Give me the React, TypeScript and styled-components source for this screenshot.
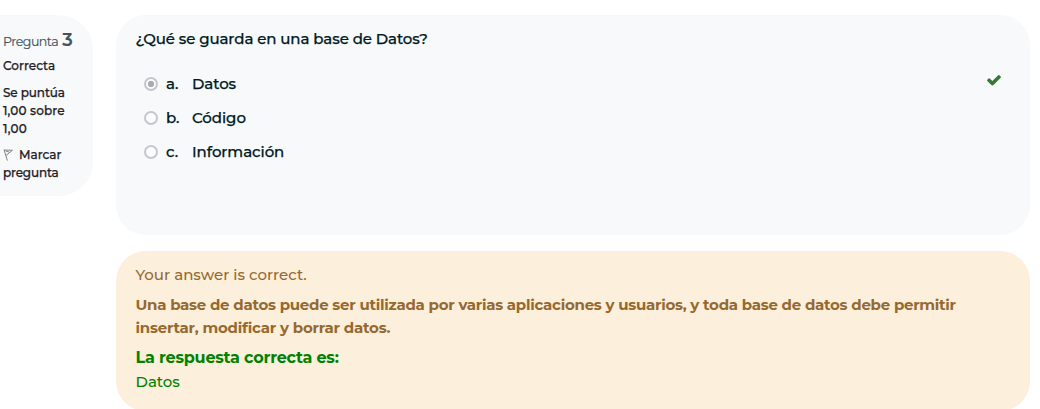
import React from "react";
import styled, { createGlobalStyle } from "styled-components";

const Global = createGlobalStyle`
  * { box-sizing: border-box; }
  body { margin: 0; background: #fff; overflow: hidden; font-family: Montserrat, Inter, sans-serif; }
`;

const Page = styled.main`
  display: flex;
  align-items: flex-start;
  gap: 23px;
  height: 409px;
  padding: 15px 10px 0 0;
  overflow: hidden;
`;

const Info = styled.aside`
  width: 123px;
  height: 181px;
  margin-left: -30px;
  padding: 13px 20px 0 33px;
  border-radius: 34px;
  background: #f8f9fb;
  color: #1d2125;
  font-size: 12px;
  font-weight: 500;
  line-height: 18px;
`;

const Heading = styled.h3`
  display: flex;
  align-items: baseline;
  gap: 4px;
  height: 29px;
  margin: 0;
  color: #46535c;
  font-size: 12.6px;
  font-weight: 400;
  letter-spacing: -0.5px;
  line-height: 24px;
  -webkit-text-stroke: 0.15px currentColor;
`;

const Number = styled.span`
  font-size: 18px;
  font-weight: 600;
`;

const InfoLine = styled.div<{ $spacing?: number }>`
  display: flex;
  align-items: center;
  height: 18px;
  white-space: nowrap;
  letter-spacing: ${(p) => p.$spacing ?? 0}px;
  -webkit-text-stroke: 0.25px currentColor;
`;

const InfoGroup = styled.div<{ $gap: number }>`
  margin-bottom: ${(p) => p.$gap}px;
`;

const FlagIcon = styled.svg`
  width: 10px;
  height: 12px;
  margin-right: 6px;
`;

const Content = styled.div`
  flex: 1;
  display: flex;
  flex-direction: column;
  gap: 16px;
`;

const Question = styled.section`
  height: 220px;
  padding: 12px 28px 0 19.5px;
  border-radius: 30px;
  background: #f8f9fb;
  color: #001a1e;
  font-size: 15px;
  font-weight: 500;
  -webkit-text-stroke: 0.25px currentColor;
`;

const Text = styled.p<{ $spacing?: number; $bold?: boolean; $size?: number; $height?: number; $gap?: number }>`
  margin: 0 0 ${(p) => p.$gap ?? 0}px;
  font-size: ${(p) => p.$size ?? 15}px;
  line-height: ${(p) => p.$height ?? 23}px;
  font-weight: ${(p) => (p.$bold ? 700 : 500)};
  letter-spacing: ${(p) => p.$spacing ?? 0}px;
  white-space: nowrap;
`;

const Options = styled.div`
  padding: 17px 0 0 8.5px;
`;

const Option = styled.label`
  display: flex;
  align-items: center;
  height: 34px;
`;

const Radio = styled.span<{ $on?: boolean }>`
  width: 14px;
  height: 14px;
  margin-right: 8px;
  border: 2px solid #c6c7cd;
  border-radius: 50%;
  background: ${(p) => (p.$on ? "radial-gradient(circle, #a9abb4 0 2.8px, #f8f9fb 3.5px)" : "#fcfcfd")};
`;

const Letter = styled.span`
  width: 26px;
  padding-bottom: 2px;
`;

const Label = styled.span`
  padding-bottom: 2px;
  letter-spacing: -0.05px;
`;

const Check = styled.svg`
  width: 16px;
  height: 16px;
  margin: 0 0 8px auto;
  fill: #357a32;
`;

const Feedback = styled.section`
  height: 160px;
  padding: 12px 20px 0 19.5px;
  border-radius: 30px;
  background: #fcefdc;
  color: #95692f;
`;

const Answer = styled.div`
  color: #008200;
`;

const options = [
  { letter: "a.", label: "Datos", on: true },
  { letter: "b.", label: "Código" },
  { letter: "c.", label: "Información" },
];

export default function App() {
  return (
    <>
      <Global />
      <Page>
        <Info>
          <Heading>Pregunta <Number>3</Number></Heading>
          <InfoGroup $gap={9}><InfoLine $spacing={0.05}>Correcta</InfoLine></InfoGroup>
          <InfoGroup $gap={8}>
            <InfoLine $spacing={-0.1}>Se puntúa</InfoLine>
            <InfoLine $spacing={0.15}>1,00 sobre</InfoLine>
            <InfoLine $spacing={0.2}>1,00</InfoLine>
          </InfoGroup>
          <InfoLine>
            <FlagIcon viewBox="0 0 10 12" fill="none" stroke="#777" strokeWidth="0.9">
              <path d="M1 .8 4.4 11.6M1 1 9.4 1.3 3 6.4M2.6 2 6.2 3" />
            </FlagIcon>
            Marcar
          </InfoLine>
          <InfoLine $spacing={-0.15}>pregunta</InfoLine>
        </Info>
        <Content>
          <Question>
            <Text $spacing={-0.1}>¿Qué se guarda en una base de Datos?</Text>
            <Options>
              {options.map((o) => (
                <Option key={o.letter}>
                  <Radio $on={o.on} />
                  <Letter>{o.letter}</Letter>
                  <Label>{o.label}</Label>
                  {o.on && (
                    <Check viewBox="0 0 1792 1792">
                      <path d="M1671 566q0 40-28 68l-724 724-136 136q-28 28-68 28t-68-28l-136-136-362-362q-28-28-28-68t28-68l136-136q28-28 68-28t68 28l294 295 656-657q28-28 68-28t68 28l136 136q28 28 28 68z" />
                    </Check>
                  )}
                </Option>
              ))}
            </Options>
          </Question>
          <Feedback>
            <Text $gap={7}>Your answer is correct.</Text>
            <Text $bold $spacing={-0.26}>Una base de datos puede ser utilizada por varias aplicaciones y usuarios, y toda base de datos debe permitir</Text>
            <Text $bold $spacing={-0.21} $gap={7}>insertar, modificar y borrar datos.</Text>
            <Answer>
              <Text $bold $size={16} $spacing={-0.2} $height={24}>La respuesta correcta es:</Text>
              <Text $height={24}>Datos</Text>
            </Answer>
          </Feedback>
        </Content>
      </Page>
    </>
  );
}
